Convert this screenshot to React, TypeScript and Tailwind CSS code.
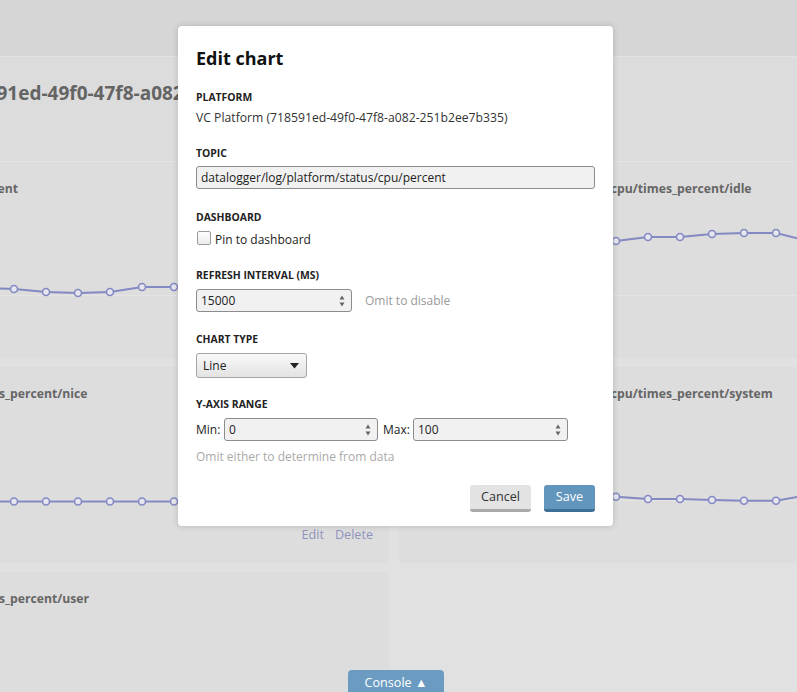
import React from "react";

type Pt = [number, number];

// -----------------------------
// Background charts (dimmed behind the modal)
// -----------------------------
const LINE = "#8389c2";

function toRel(abs: Pt[], left: number): Pt[] {
  return abs.map(([x, y]) => [x - left, y]);
}

const LEFT = -268;
const RIGHT = 399;

const leftAbsX = [-18, 14, 46, 78, 110, 142, 174, 206, 238, 270, 302, 334, 366];
const rightAbsX = [584, 616, 648, 680, 712, 744, 776, 808];

const charts = {
  percent: toRel(
    leftAbsX.map((x, i) => [x, [92, 93, 96, 97, 96, 91, 91, 92, 94, 93, 95, 92, 93][i]] as Pt),
    LEFT
  ),
  idle: toRel(
    rightAbsX.map((x, i) => [x, [47, 45, 41, 41, 38, 37, 37, 45][i]] as Pt),
    RIGHT
  ),
  nice: toRel(leftAbsX.map((x) => [x, 100.5] as Pt), LEFT),
  system: toRel(
    rightAbsX.map((x, i) => [x, [97, 95.7, 98, 98, 99, 99.7, 99.7, 94][i]] as Pt),
    RIGHT
  ),
};

function Chart({ points }: { points: Pt[] }) {
  const d = points.map(([x, y], i) => `${i ? "L" : "M"}${x} ${y}`).join(" ");
  return (
    <svg width={657} height={120} className="block -mt-[2px]">
      <line x1={0} x2={657} y1={99.5} y2={99.5} stroke="#e4e4e4" strokeWidth={1} />
      <path d={d} fill="none" stroke={LINE} strokeWidth={2} />
      {points.map(([x, y], i) => (
        <circle key={i} cx={x} cy={y} r={3.5} fill="#e6e6ee" stroke={LINE} strokeWidth={1.6} />
      ))}
    </svg>
  );
}

function Card({ title, points }: { title: string; points?: Pt[] }) {
  return (
    <div className="h-[196px] bg-[#dddddd] flex flex-col overflow-hidden">
      <div className="pt-[18px] px-[16px] text-[12.2px] leading-[18px] font-bold text-[#666666] whitespace-nowrap">
        {title}
      </div>
      {points ? <Chart points={points} /> : <div className="h-[118px]" />}
      <div className="pt-[5px] pr-[16px] flex justify-end gap-[11px] text-[12.6px] leading-[18px] text-[#8f94bd]">
        <span>Edit</span>
        <span>Delete</span>
      </div>
    </div>
  );
}

// -----------------------------
// Form bits
// -----------------------------
function Spinner() {
  return (
    <svg width="8" height="16" viewBox="0 0 8 16" className="shrink-0">
      <path d="M4 2.5 L6.5 6.5 L1.5 6.5 Z" fill="#666" />
      <path d="M4 13.5 L6.5 9.5 L1.5 9.5 Z" fill="#666" />
    </svg>
  );
}

function NumberBox({ value, width }: { value: string; width: string }) {
  return (
    <div
      className={`${width} h-[23px] flex items-center pl-[4px] pr-[5px] bg-[#f1f1f1] border border-[#8c8c8c] rounded-[3px]`}
    >
      <input
        readOnly
        value={value}
        className="flex-1 min-w-0 bg-transparent outline-none text-[12px] text-[#222]"
      />
      <Spinner />
    </div>
  );
}

function Label({ children }: { children: React.ReactNode }) {
  return (
    <div className="text-[10.4px] leading-[14px] font-bold text-[#222] uppercase">
      {children}
    </div>
  );
}

export default function App() {
  return (
    <div className="relative w-[797px] h-[692px] overflow-hidden bg-[#e1e1e1] font-['Open_Sans',sans-serif]">
      {/* nav */}
      <div className="h-[57px] bg-[#d6d6d6] border-b border-[#e2e2e2]" />

      {/* page header */}
      <div className="h-[105px] bg-[#dcdcdc] border-b border-[#e2e2e2] pt-[22px]">
        <div className="-ml-[47px] text-[19px] leading-[28px] font-bold text-[#646464] whitespace-nowrap">
          718591ed-49f0-47f8-a082-251b2ee7b335
        </div>
      </div>

      {/* chart grid */}
      <div className="-ml-[268px] w-[1400px] grid grid-cols-[657px_657px] gap-x-[10px] gap-y-[9px]">
        <Card title="datalogger/log/platform/status/cpu/percent" points={charts.percent} />
        <Card title="datalogger/log/platform/status/cpu/times_percent/idle" points={charts.idle} />
        <Card title="datalogger/log/platform/status/cpu/times_percent/nice" points={charts.nice} />
        <Card title="datalogger/log/platform/status/cpu/times_percent/system" points={charts.system} />
        <Card title="datalogger/log/platform/status/cpu/times_percent/user" />
      </div>

      {/* console toggle */}
      <div className="absolute left-[348px] top-[670px] w-[96px] h-[26px] rounded-t-[4px] bg-[#6b9bc0] text-white text-[12.6px] leading-[26px] text-center">
        Console ▲
      </div>

      {/* modal */}
      <div className="absolute left-[178px] top-[26px] w-[435px] h-[500px] bg-white rounded-[4px] shadow-[0_0_6px_rgba(0,0,0,0.18)] pt-[20px] px-[18px] text-[#222]">
        <h1 className="text-[18px] leading-[24px] font-bold text-[#111]">Edit chart</h1>

        <div className="mt-[20px]">
          <Label>Platform</Label>
          <div className="mt-[5px] text-[12.2px] leading-[18px] text-[#333]">
            VC Platform (718591ed-49f0-47f8-a082-251b2ee7b335)
          </div>
        </div>

        <div className="mt-[19px]">
          <Label>Topic</Label>
          <input
            readOnly
            value="datalogger/log/platform/status/cpu/percent"
            className="mt-[6px] block w-[399px] h-[23px] px-[4px] bg-[#f1f1f1] border border-[#8c8c8c] rounded-[3px] text-[12px] text-[#222] outline-none"
          />
        </div>

        <div className="mt-[21px]">
          <Label>Dashboard</Label>
          <label className="mt-[7px] flex items-start gap-[4px] text-[12px] leading-[18px] text-[#222]">
            <span className="ml-[1px] w-[14px] h-[14px] rounded-[2px] border border-[#9a9a9a] bg-gradient-to-b from-[#fdfdfd] to-[#ececec]" />
            <span>Pin to dashboard</span>
          </label>
        </div>

        <div className="mt-[19px]">
          <Label>Refresh interval (ms)</Label>
          <div className="mt-[7px] flex items-center gap-[13px]">
            <NumberBox value="15000" width="w-[156px]" />
            <span className="text-[12px] text-[#999]">Omit to disable</span>
          </div>
        </div>

        <div className="mt-[20px]">
          <Label>Chart type</Label>
          <div className="mt-[7px] w-[111px] h-[25px] flex items-center justify-between pl-[6px] pr-[7px] rounded-[3px] border border-[#a5a5a5] bg-gradient-to-b from-[#f9f9f9] to-[#e3e3e3] text-[12px] text-[#222]">
            <span>Line</span>
            <svg width="9" height="6" viewBox="0 0 9 6">
              <path d="M0 0 H9 L4.5 5.5 Z" fill="#222" />
            </svg>
          </div>
        </div>

        <div className="mt-[19px]">
          <Label>Y-axis range</Label>
          <div className="mt-[7px] flex items-center text-[12px] text-[#222]">
            <span className="w-[28px]">Min:</span>
            <NumberBox value="0" width="w-[154px]" />
            <span className="w-[35px] pl-[5px]">Max:</span>
            <NumberBox value="100" width="w-[155px]" />
          </div>
          <div className="mt-[7px] text-[12px] leading-[18px] text-[#aaa]">
            Omit either to determine from data
          </div>
        </div>

        <div className="mt-[19px] flex justify-end gap-[13px] pr-[-1px]">
          <button className="w-[61px] h-[27px] rounded-[3px] bg-[#e3e3e3] border-b-[3px] border-[#a9a9a9] text-[12.6px] text-[#333]">
            Cancel
          </button>
          <button className="w-[51px] h-[27px] rounded-[3px] bg-[#6396bd] border-b-[3px] border-[#3e6f96] text-[12.6px] text-white">
            Save
          </button>
        </div>
      </div>
    </div>
  );
}
